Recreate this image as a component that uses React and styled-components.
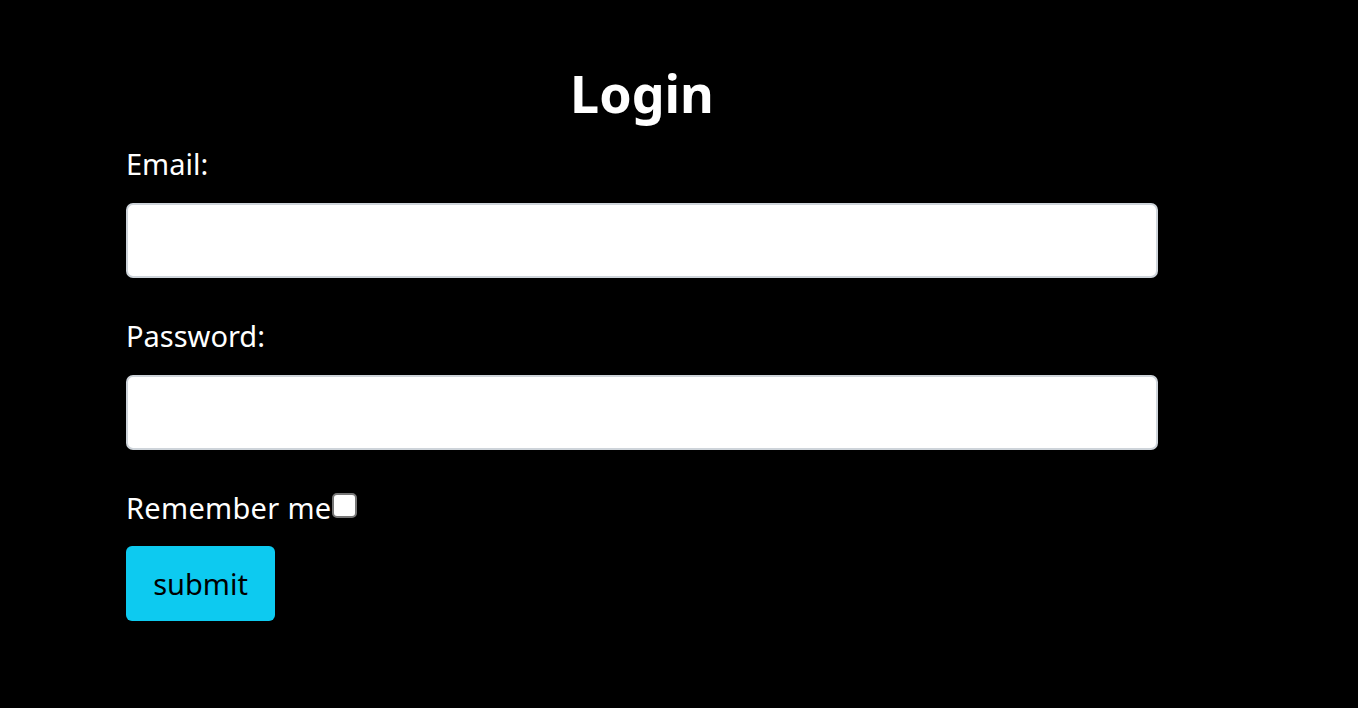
import React, { useState } from 'react';
import styled, { createGlobalStyle } from 'styled-components';

const GlobalStyle = createGlobalStyle`
  html, body {
    margin: 0;
    padding: 0;
    background: #000;
  }
  body {
    font-family: "Noto Sans", "Open Sans", sans-serif;
    color: #fff;
  }
`

const Page = styled.div`
  min-height: 708px;
  background: #000;
  padding-top: 58px;
  box-sizing: border-box;
`

const Form = styled.form`
  width: 1032px;
  margin-left: 126px;
  display: flex;
  flex-direction: column;
`

const Title = styled.h2`
  margin: 0 0 16px 0;
  text-align: center;
  font-size: 52px;
  font-weight: 700;
  line-height: 70px;
`

const Field = styled.div`
  display: flex;
  flex-direction: column;
  margin-bottom: 38px;
`

const Label = styled.label`
  font-size: 29px;
  line-height: 40px;
  margin-bottom: 19px;
`

const Input = styled.input`
  box-sizing: border-box;
  width: 100%;
  height: 75px;
  border: 2px solid #ced4da;
  border-radius: 7px;
  background: #fff;
  font-size: 28px;
  padding: 0 18px;
  outline: none;
`

const CheckRow = styled.div`
  display: flex;
  align-items: center;
  font-size: 29px;
  line-height: 40px;
  letter-spacing: 0.3px;
  margin: 0 0 18px 0;
`

const Check = styled.input.attrs({ type: 'checkbox' })`
  appearance: none;
  width: 25px;
  height: 25px;
  margin: 0 0 6px 1px;
  box-sizing: border-box;
  border: 2px solid #767676;
  border-radius: 5px;
  background: ${(props) => props.checked ? '#0d6efd' : '#fff'};
`

const Submit = styled.button`
  align-self: flex-start;
  width: 149px;
  height: 75px;
  border: none;
  border-radius: 6px;
  background: #0dcaf0;
  color: #000;
  font-family: "Noto Sans", "Open Sans", sans-serif;
  font-size: 29px;
`

const App = () => {
  const [remember, setRemember] = useState(false)

  return (
    <>
      <GlobalStyle />
      <Page>
        <Form onSubmit={(e) => e.preventDefault()}>
          <Title>Login</Title>
          <Field>
            <Label htmlFor="email">Email:</Label>
            <Input id="email" type="email" />
          </Field>
          <Field>
            <Label htmlFor="password">Password:</Label>
            <Input id="password" type="password" />
          </Field>
          <CheckRow>
            Remember me
            <Check checked={remember} onChange={() => setRemember(!remember)} />
          </CheckRow>
          <Submit type="submit">submit</Submit>
        </Form>
      </Page>
    </>
  )
}

export default App;
